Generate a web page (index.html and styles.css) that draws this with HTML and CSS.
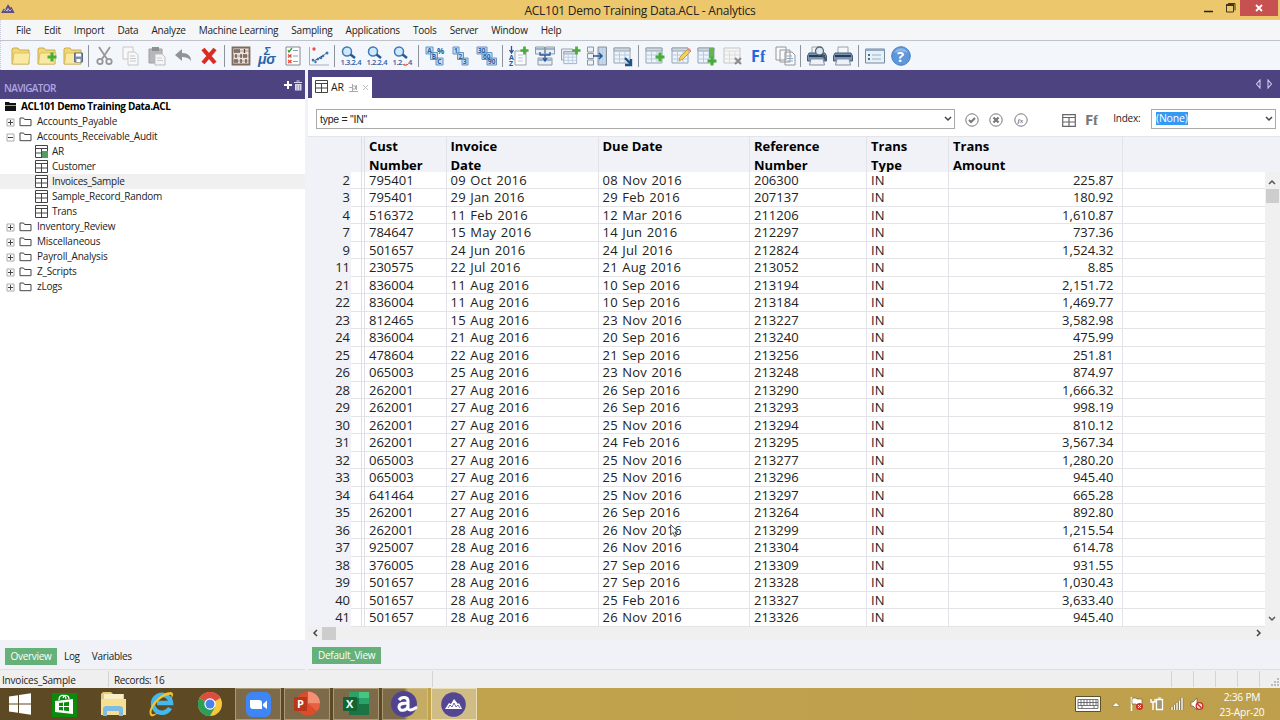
FILE: index.html
```html
<!DOCTYPE html>
<html lang="en">
<head>
  <meta charset="UTF-8" />
  <meta name="viewport" content="width=device-width, initial-scale=1.0"/>
  <title>ACL101 Demo Training Data.ACL - Analytics</title>
  <link rel="stylesheet" href="styles.css">
</head>
<body>
  <svg class="defs">
    <symbol id="i-table" viewBox="0 0 13 13"><path d="M.5.5h12v12H.5zM.5 3.5h12M6.5 3.5v9M.5 8h12" fill="#fff" stroke="#444"/></symbol>
    <symbol id="i-folder" viewBox="0 0 13 10"><path d="M1 8.7V1h3.6l1 1.5H12v6.2z" fill="#fff" stroke="#444"/></symbol>
    <symbol id="i-yfolder" viewBox="0 0 20 20"><path d="M1 18V3l1-1h5l1.500 2H18v14z" fill="#f0d878" stroke="#c9ac4c"/><path d="M1.500 18 3 7h16l-1.500 11z" fill="#fae9a0" stroke="#d3b65a" stroke-width=".7"/></symbol>
    <symbol id="i-lens" viewBox="0 0 20 20"><circle cx="6" cy="5.500" r="4.500" fill="#d2e9fb" stroke="#3c79b8" stroke-width="1.500"/><path d="M9.500 8.500 14 12" stroke="#26599a" stroke-width="2.500"/></symbol>
    <symbol id="i-grid" viewBox="0 0 20 20"><path d="M1 2h16v15H1z" fill="#eef4fb" stroke="#98a3ad"/><path d="M1 2h16v3H1z" fill="#cfd9e2" stroke="#98a3ad"/><path d="M6.500 5v12M12 5v12M1 9h16M1 13h16" stroke="#b5cbe2"/></symbol>
    <symbol id="i-plus" viewBox="0 0 10 10"><path d="M5 .5v9M.5 5h9" stroke="#48ad37" stroke-width="3"/></symbol>
    <symbol id="i-printer" viewBox="0 0 20 20"><path d="M5 8V1h10v7" fill="#f5f7f9" stroke="#9aa4ad"/><path d="M2 7h16l1.500 3v5H.5v-5z" fill="#7b93b1" stroke="#465b75"/><path d="M2 10h16" stroke="#243b5c" stroke-width="2"/><path d="M4 13h12l1.500 6h-15z" fill="#eef2f6" stroke="#8291a0"/></symbol>
    <symbol id="i-peaks" viewBox="0 0 16 12"><path d="m0 11 3-5 1.500 1L8 1l3 4 1-1 3.500 7z"/><path d="m3 9 2-2 2 2 1-3 2 3 2-2" fill="none" stroke="#d9d2e7"/></symbol>
  </svg>

  <div class="titlebar">
    <svg class="app-icon" viewBox="0 0 16 12"><use href="#i-peaks"/></svg>
    <div class="caption">ACL101 Demo Training Data.ACL - Analytics</div>
    <div class="win-btns">
      <svg width="50" height="19"><path d="M3 11.500h9" stroke="#222" stroke-width="1.500"/><path d="M27 3.500h7v7M25.500 5h7v7h-7z" fill="none" stroke="#453718"/><path d="M25 5h8" stroke="#222" stroke-width="1.500"/></svg>
      <div class="close"><svg width="8" height="8"><path d="m1 1 6 6M7 1 1 7" stroke="#fff" stroke-width="1.800"/></svg></div>
    </div>
  </div>

  <div class="menubar">
    <span>File</span><span>Edit</span><span>Import</span><span>Data</span><span>Analyze</span><span>Machine Learning</span><span>Sampling</span><span>Applications</span><span>Tools</span><span>Server</span><span>Window</span><span>Help</span>
  </div>

  <div class="toolbar">
    <svg viewBox="0 0 20 20"><use href="#i-yfolder"/></svg>
    <svg viewBox="0 0 20 20"><use href="#i-yfolder"/><use href="#i-plus" x="10" y="6" width="10" height="10"/></svg>
    <svg viewBox="0 0 20 20"><use href="#i-yfolder"/><path d="M11.500 7h8v9h-8z" fill="#7e8fae" stroke="#5e6b85"/><path d="M13 7.500h5v3h-5zM13.500 13h4v3h-4z" fill="#fff"/></svg>
    <i></i>
    <svg viewBox="0 0 20 20"><g fill="none" stroke="#979797" stroke-width="1.800"><path d="m4 1 8 12M15 1 7 13"/><circle cx="5" cy="15.500" r="2.700"/><circle cx="14" cy="15.500" r="2.700"/></g></svg>
    <svg viewBox="0 0 20 20" fill="#f8f8f8" stroke="#c6c8ca"><path d="M2 1h10v12H2z"/><path d="M7 6h7l3 3v10H7z"/><path d="M9 10h5M9 12.500h6M9 15h6"/></svg>
    <svg viewBox="0 0 20 20"><path d="M2 3h13v14H2z" fill="#b5b7ba" stroke="#9da0a3"/><path d="M5 1h7v4H5z" fill="#8d9093"/><path d="M8 8h7l3 3v8H8z" fill="#f5f5f5" stroke="#b9bcbf"/><path d="M10 12h5M10 14.500h6" stroke="#ccc"/></svg>
    <svg viewBox="0 0 20 20"><path d="m2 9 7-6v4c6 0 9 3 9 8-2-3-5-4-9-4v4z" fill="#909498"/></svg>
    <svg viewBox="0 0 20 20"><path d="m4 3 12 14M16 3 4 17" stroke="#dc2b20" stroke-width="4.200"/></svg>
    <i></i>
    <svg viewBox="0 0 20 20"><path d="M1.500 1.500h17v17h-17z" fill="#eee2da" stroke="#806b62" stroke-width="1.800"/><path d="M2 5h16M2 10h16M2 15h16" stroke="#8c7a72" stroke-width=".7"/><path d="M4 3v4M6 3v4M8 3v4M13.500 3v4M5 8v4M10 8v4M13 8v4M15 8v4M4 13v4M6 13v4M10 13v4M15 13v4" stroke="#5a4944" stroke-width="1.300"/></svg>
    <svg viewBox="0 0 20 20" class="greek"><text x="7" y="8.500" font-size="11">Σ</text><text x="1" y="17.500" font-size="14">μσ</text></svg>
    <svg viewBox="0 0 20 20"><path d="M3 1h14v18H3z" fill="#fff" stroke="#85898d"/><path d="m5 4 1 2 3-4" fill="none" stroke="#329e37" stroke-width="1.300"/><path d="m5 8.500 3.500 3M8.500 8.500 5 11.500M5 14l3.500 3M8.500 14 5 17" stroke="#e24838" stroke-width="1.400"/><path d="M10 4.500h5M10 10h5M10 15.500h5" stroke="#8da0ba"/></svg>
    <svg viewBox="0 0 20 20"><path d="M.5 1v18H20" fill="none" stroke="#a6adb6"/><path d="m3 16 5-2 5-3 6-5" stroke="#c0cbd9" stroke-width=".7"/><g fill="#3676b7"><circle cx="4" cy="14" r="1.300"/><circle cx="6.500" cy="16" r="1.200"/><circle cx="9" cy="13" r="1.300"/><circle cx="12" cy="12" r="1.300"/><circle cx="14" cy="10" r="1.300"/><circle cx="18" cy="7" r="1.500"/></g><circle cx="5" cy="3" r="1.700" fill="#ed5146"/></svg>
    <i></i>
    <svg viewBox="0 0 20 20" class="num"><use href="#i-lens"/><text x="-.5" y="18.500">1.3.2.4</text></svg>
    <svg viewBox="0 0 20 20" class="num"><use href="#i-lens"/><text x="-.5" y="18.500">1.2.2.4</text></svg>
    <svg viewBox="0 0 20 20" class="num"><use href="#i-lens"/><text x="-.5" y="18.500">1.2._.4</text><path d="m11 18 1.500 1 1.500-1" fill="none" stroke="#e4513f"/></svg>
    <i></i>
    <svg viewBox="0 0 20 20" class="box"><path d="M1 1h7v7H1zM5.500 6.500h7v7h-7zM11 12h7v7h-7z"/><text x="2.200" y="7">A</text><text x="6.800" y="12.500">B</text><text x="12.300" y="18">C</text><text x="12" y="8" font-size="8">%</text></svg>
    <svg viewBox="0 0 20 20" class="box"><path d="M2 1h6v7H2zM6.500 6.500h6v7h-6zM11 12h6v7h-6z"/><text x="3" y="7">1</text><text x="7.500" y="12.500">2</text><text x="12" y="18">3</text></svg>
    <svg viewBox="0 0 20 20" class="box"><path d="M0 1h10v7H0zM5 6.500h10v7H5zM10 12h9.500v7H10z"/><text x="1" y="7">30</text><text x="6" y="12.500">60</text><text x="11" y="18">90</text></svg>
    <i></i>
    <svg viewBox="0 0 20 20" class="az"><path d="M6 5h11v14H6z" fill="#fafcfd" stroke="#9aa3ab"/><path d="M9 9h5M9 12h5M9 15h5" stroke="#b9c5d2"/><path d="M2.500 0v6M.5 4l2 3 2-3" fill="none" stroke="#28569a" stroke-width="1.300"/><text x="0" y="13.500">A</text><text x="0" y="20">Z</text><use href="#i-plus" x="11" y="0" width="9" height="9"/></svg>
    <svg viewBox="0 0 20 20"><path d="M.5 1h9v7h-9zM10.500 1h9v7h-9zM3 12h14v7H3z" fill="#e5edf5" stroke="#8d9aa6"/><path d="M1 3h8M11 3h8M3 14h14" stroke="#9fb4c9" stroke-width="2"/><path d="M5 6v3h10V6M10 9v5m-2-2 2 3 2-3" fill="none" stroke="#28569a" stroke-width="1.300"/></svg>
    <svg viewBox="0 0 20 20"><path d="M.5 3h11v11H.5z" fill="#e9eff5" stroke="#9aa3ab"/><use href="#i-grid" x="2" y="4" width="16" height="16"/><use href="#i-plus" x="11" y="0" width="9" height="9"/></svg>
    <svg viewBox="0 0 20 20"><path d="M.5 1h6v5h-6zM.5 7.500h6v5h-6zM.5 14h6v5h-6z" fill="#eef3f8" stroke="#8995a0"/><path d="M11 1h8.500v18H11z" fill="#b9cde2" stroke="#8997a5"/><path d="M14 2v16M17 2v16" stroke="#d5e2ee"/><path d="M6 10h9m-3-3 3 3-3 3" fill="none" stroke="#28569a" stroke-width="1.500"/></svg>
    <svg viewBox="0 0 20 20"><use href="#i-grid"/><path d="m12 12 6 6m0-5v6h-6" fill="none" stroke="#235286" stroke-width="2.400"/></svg>
    <i></i>
    <svg viewBox="0 0 20 20"><use href="#i-grid"/><use href="#i-plus" x="10" y="6" width="10" height="10"/></svg>
    <svg viewBox="0 0 20 20"><use href="#i-grid"/><path d="m8 15 1-4 8-8 3 2-8 8z" fill="#f1d35b" stroke="#b28e2f" stroke-width=".8"/><path d="m16 4 2-2 2 2-1.500 2z" fill="#e98c92"/></svg>
    <svg viewBox="0 0 20 20"><use href="#i-grid"/><path d="M12 2h5v10h-5z" fill="#64b451"/><use href="#i-plus" x="10" y="10" width="10" height="10"/></svg>
    <svg viewBox="0 0 20 20"><path d="M1 2h16v15H1z" fill="#f6f6f6" stroke="#c5c5c5"/><path d="M1 5h16M6.500 5v12M12 5v12M1 9h16M1 13h16" stroke="#ddd"/><path d="m12 12 6 6M18 12l-6 6" stroke="#8b8b8b" stroke-width="2"/></svg>
    <svg viewBox="0 0 20 20" class="ff"><text x="2" y="16">F</text><text x="11" y="16" class="serif">f</text></svg>
    <svg viewBox="0 0 20 20" fill="#fafafa" stroke="#92979c"><path d="M1 1h10v13H1zM5 4h10v12H5zM10 6h7l3 3v10H10z"/><path d="M12 10h5M12 12.500h6M12 15h6" stroke="#8fabc9"/></svg>
    <i></i>
    <svg viewBox="0 0 20 20"><use href="#i-printer"/><circle cx="12.500" cy="5" r="4" fill="#dce8f2" stroke="#5a6775" stroke-width="1.300"/><path d="m15 8 4 6" stroke="#4b5663" stroke-width="2.200"/></svg>
    <svg viewBox="0 0 20 20"><use href="#i-printer"/></svg>
    <i></i>
    <svg viewBox="0 0 20 20"><path d="M.5 3h19v14H.5z" fill="#e4f1f9" stroke="#77889b"/><path d="M.5 3h19v2H.5z" fill="#8ba8c9"/><path d="M3 8h2v2H3zM3 12h2v2H3z" fill="#54697f"/><path d="M7 9h9M7 13h9" stroke="#a0afba"/></svg>
    <svg viewBox="0 0 20 20"><circle cx="10" cy="10" r="9.300" fill="#5d97dc" stroke="#447dbe"/><path d="M3 7a7.500 7.500 0 0 1 14 0c-5-2-9-2-14 0" fill="#8bb7ea"/><text x="6" y="15.500" class="help">?</text></svg>
  </div>

  <div class="workspace">
    <div class="navigator">
      <div class="nav-head"><span>NAVIGATOR</span>
        <svg width="20" height="12"><path d="M5 1v8M1 5h8" stroke="#fff" stroke-width="2"/><path d="M11 2.500h8M13.500 1h3" stroke="#dcd7ef" stroke-width="1.200"/><path d="M12 4h6.500v6.500H12z" fill="#dcd7ef"/><path d="M14 5v5M16.500 5v5" stroke="#8d84b5" stroke-width=".7"/></svg>
      </div>
      <div class="tree" id="tree">
        <div class="root"><svg width="13" height="11"><path d="M1 10V1h4l1 1h6v8z" fill="#111"/><path d="M0 4.500h13" stroke="#fff" stroke-width=".6"/></svg>ACL101 Demo Training Data.ACL</div>
      </div>
      <div class="tabs"><b>Overview</b><span>Log</span><span>Variables</span></div>
    </div>

    <div class="view">
      <div class="view-head">
        <div class="tab"><svg width="13" height="13"><use href="#i-table"/></svg>AR
          <svg class="pin" width="9" height="8"><path d="M0 3.500h3M3.500 0v7M3.500 2h3v3h-3M7.500 1v5M0 7.500h9" stroke="#aaa" fill="none"/></svg>
          <svg width="7" height="7"><path d="m1 1 5 5M6 1 1 6" stroke="#bbb"/></svg>
        </div>
        <svg width="18" height="10"><path d="M5 1v8L1.500 5zM13 1v8l3.500-4z" fill="none" stroke="#cfc7ee" stroke-width="1.100"/></svg>
      </div>
      <div class="filter">
        <div class="combo expr">type = "IN"<svg width="8" height="6"><path d="m1 1 3 3 3-3" fill="none" stroke="#444" stroke-width="1.500"/></svg></div>
        <svg class="round" viewBox="0 0 14 14"><circle cx="7" cy="7" r="6.200"/><path d="m4 7 2 2 4-4" stroke-width="2"/></svg>
        <svg class="round" viewBox="0 0 14 14"><circle cx="7" cy="7" r="6.200"/><path d="m4.500 4.500 5 5M9.500 4.500l-5 5" stroke-width="2.200"/></svg>
        <svg class="round" viewBox="0 0 14 14"><circle cx="7" cy="7" r="6.200"/><text x="3.500" y="9.500">fx</text></svg>
        <svg class="grid-btn" viewBox="0 0 14 13"><path d="M.7.7h12.600v11.600H.7zM.7 3.500h12.600M7 3.500v9M.7 8h12.600" fill="none" stroke="#666" stroke-width="1.200"/></svg>
        <svg class="font-btn" viewBox="0 0 14 14"><text x="0" y="12">F</text><text x="8" y="12" class="serif">f</text></svg>
        <label>Index:</label>
        <div class="combo index"><em>(None)</em><svg width="8" height="6"><path d="m1 1 3 3 3-3" fill="none" stroke="#444" stroke-width="1.500"/></svg></div>
      </div>
      <div class="grid-head">
        <div class="gut"></div><div class="split"></div>
        <div>Cust<br>Number</div><div>Invoice<br>Date</div><div>Due Date</div><div>Reference<br>Number</div><div>Trans<br>Type</div><div>Trans<br>Amount</div><div></div>
      </div>
      <div class="grid-body">
        <div class="rows" id="rows"></div>
        <div class="vscroll">
          <svg width="8" height="6"><path d="m1 5 3-3 3 3" fill="none" stroke="#555" stroke-width="1.500"/></svg>
          <div class="thumb"></div>
          <svg class="down" width="8" height="6"><path d="m1 1 3 3 3-3" fill="none" stroke="#555" stroke-width="1.500"/></svg>
        </div>
      </div>
      <div class="hscroll">
        <svg width="6" height="8"><path d="M5 1 2 4l3 3" fill="none" stroke="#444" stroke-width="1.500"/></svg>
        <div class="thumb"></div>
        <svg class="right" width="6" height="8"><path d="m1 1 3 3-3 3" fill="none" stroke="#444" stroke-width="1.500"/></svg>
      </div>
      <div class="tabs"><b>Default_View</b></div>
    </div>
  </div>

  <div class="statusbar"><span class="name">Invoices_Sample</span><span class="records">Records: 16</span><span class="rest"></span><span></span><span></span><span></span><span></span>
    <svg width="8" height="8"><path d="M6 0h2v2H6zM3 3h2v2H3zM6 3h2v2H6zM0 6h2v2H0zM3 6h2v2H3zM6 6h2v2H6z" fill="#bbb"/></svg>
  </div>

  <div class="taskbar">
    <div class="task start"><svg width="22" height="22" viewBox="0 0 22 22"><path d="m0 3.500 9-1.300v8.300H0zM10 2l12-1.700v10.200H10zM0 11.500h9v8.300l-9-1.300zM10 11.500h12v10.200L10 20z" fill="#fff"/></svg></div>
    <div class="task store"><svg width="25" height="25" viewBox="0 0 25 25"><path d="M0 1h25v24H0z" fill="#0b8a0e"/><path d="M7 8c0-6 7-6 7-1M11 6c1-4 6-3 6 1" fill="none" stroke="#fff" stroke-width="1.200"/><path d="m3 9 18-2v15L3 20z" fill="#fff"/><path d="m7 11 4-.5V14H7zM12 10.400l5-.6V14h-5zM7 15h4v3.500L7 18zM12 15h5v4.200l-5-.6z" fill="#0b8a0e"/></svg></div>
    <div class="task explorer"><svg width="26" height="26" viewBox="0 0 26 26"><path d="M1 3 3 1h8l2 2h11v20H1z" fill="#e6cb72"/><path d="M4 3h19v6H4z" fill="#f7eec7"/><path d="M1 8h25v16H1z" fill="#f5df91"/><path d="M3 25v-7c0-3 3-3 4-3h12c3 0 4 1 4 3v7h-4v-5H7v5z" fill="#7fbbe3"/></svg></div>
    <div class="task ie"><svg width="26" height="26" viewBox="0 0 26 26"><path d="M22 17a9 9 0 1 1 1-5H9" fill="none" stroke="#45b8eb" stroke-width="4.500"/><path d="M3 25c-6-5 8-24 20-24 4 1 1 6 0 7 1-3 1-5-2-4C10 6 1 20 4 23c2 1 5-1 6-2-2 3-5 5-7 4" fill="#f1c432"/></svg></div>
    <div class="task chrome"><svg width="24" height="24" viewBox="0 0 24 24"><circle cx="12" cy="12" r="12" fill="#f7c83b"/><path d="M12 12 1.600 6A12 12 0 0 1 22.400 6z" fill="#dd4c40"/><path d="M12 12 1.600 6A12 12 0 0 0 12 24l5-9z" fill="#2e9d58"/><circle cx="12" cy="12" r="5.700" fill="#fff"/><circle cx="12" cy="12" r="4.500" fill="#4684ec"/></svg></div>
    <div class="task open zoom"><svg width="25" height="25" viewBox="0 0 25 25"><rect width="25" height="25" rx="6" fill="#3e86f5"/><path d="M4 8h9q3 0 3 3v6H7q-3 0-3-3zM17 12l4-3.500v8.500l-4-3z" fill="#fff"/></svg></div>
    <div class="task open ppt"><svg width="26" height="26" viewBox="0 0 26 26"><circle cx="14" cy="12.500" r="12" fill="#d94d2c"/><path d="M14 .5a12 12 0 0 1 12 12H14z" fill="#f38f73"/><path d="M14 12.500h12a12 12 0 0 1-3 8z" fill="#e86043"/><rect y="6" width="13" height="14" rx="1" fill="#b9351b"/><text x="3" y="17">P</text></svg></div>
    <div class="task open excel"><svg width="26" height="26" viewBox="0 0 26 26"><path d="M6 1h20v23H6z" fill="#1a7444"/><path d="M6 1h10v6H6zM16 7h10v6H16z" fill="#2ba268"/><path d="M16 1h10v6H16z" fill="#43c783"/><rect y="6" width="14" height="14" rx="1" fill="#0f6534"/><text x="3" y="17">X</text></svg></div>
    <div class="task open acl-a"><svg width="27" height="26" viewBox="0 0 27 26"><circle cx="13" cy="13" r="13" fill="#504492"/><path d="M8 9c3-4 9-3 9 1v8M17 12c-4 0-9 0-9 4 0 5 8 4 9-1m0 3c3 3 7-1 9-2" fill="none" stroke="#fff" stroke-width="3"/></svg></div>
    <div class="task open active"><svg width="25" height="25" viewBox="0 0 25 25"><circle cx="12.500" cy="12.500" r="12.300" fill="#534793"/><path d="m4 17 4-6 2 1 3-5 4 5 1-1 3 6z" fill="#fff"/><path d="m7 16 2-3 2 2 2-4 2 4 2-2 2 3" fill="none" stroke="#534793" stroke-width=".8"/></svg></div>
    <div class="tray">
      <svg class="kbd" width="26" height="16" viewBox="0 0 26 16"><path d="M.5.5h25v15H.5z" fill="#fff" stroke="#5d5127"/><path d="M3 3.500h20v9H3zM3 6.500h20M3 9.500h20M6 3.500v6M9 3.500v6M12 3.500v6M15 3.500v6M18 3.500v6M21 3.500v6M7 9.500v3M19 9.500v3" fill="none" stroke="#555" stroke-width=".8"/></svg>
      <svg class="up" width="8" height="5"><path d="m0 4.500 4-4 4 4z" fill="#fff" stroke="#75602b" stroke-width=".5"/></svg>
      <svg width="14" height="14" viewBox="0 0 14 14"><path d="M1.500 0v14" stroke="#fff" stroke-width="1.500"/><path d="M2 1h4l1 1h5v6H7L6 7H2z" fill="#fff" stroke="#64542c" stroke-width=".6"/><circle cx="9.500" cy="9.500" r="3.500" fill="#d1302b"/><path d="m8 8 3 3M11 8l-3 3" stroke="#fff"/></svg>
      <svg width="14" height="14" viewBox="0 0 14 14"><path d="M1 2v3h4V2M3 5v8" fill="none" stroke="#fff" stroke-width="1.400"/><path d="M6.500 2.500h6v10h-6z" fill="#a19773" stroke="#fff" stroke-width="1.300"/><path d="M8 1h3" stroke="#fff"/></svg>
      <svg width="14" height="14" viewBox="0 0 14 14"><path d="M2 10v3M4.500 8v5M7 6v7M9.500 3.500V13M12 1v12" stroke="#5f502a" stroke-width="2.400"/><path d="M2 10v3M4.500 8v5M7 6v7M9.500 3.500V13M12 1v12" stroke="#fff" stroke-width="1.500"/></svg>
      <svg width="14" height="14" viewBox="0 0 14 14"><path d="M1 5h2l4-4v12L3 9H1z" fill="#fff" stroke="#6d5c30" stroke-width=".7"/><circle cx="9.500" cy="9" r="3.300" fill="#f7d9d4" stroke="#cd2c27" stroke-width="1.300"/><path d="m7.500 7 4 4" stroke="#cd2c27" stroke-width="1.300"/></svg>
    </div>
    <div class="clock">2:36 PM<br>23-Apr-20</div>
  </div>

  <svg class="cursor" viewBox="0 0 10 14"><path d="M.7.700v10l2.400-2.200 1.700 4 1.700-.8-1.700-3.800H8z" fill="#fff" stroke="#333" stroke-width=".8"/></svg>

  <script>
    const treeItems = [
      ['+', 'Accounts_Payable'],
      ['-', 'Accounts_Receivable_Audit'],
      ['', 'AR', 'open-table'],
      ['', 'Customer'],
      ['', 'Invoices_Sample', 'selected'],
      ['', 'Sample_Record_Random'],
      ['', 'Trans'],
      ['+', 'Inventory_Review'],
      ['+', 'Miscellaneous'],
      ['+', 'Payroll_Analysis'],
      ['+', 'Z_Scripts'],
      ['+', 'zLogs']
    ];

    // record, customer, invoice date, due date, reference, amount
    const records = `2|795401|09 Oct 2016|08 Nov 2016|206300|225.87
3|795401|29 Jan 2016|29 Feb 2016|207137|180.92
4|516372|11 Feb 2016|12 Mar 2016|211206|1,610.87
7|784647|15 May 2016|14 Jun 2016|212297|737.36
9|501657|24 Jun 2016|24 Jul 2016|212824|1,524.32
11|230575|22 Jul 2016|21 Aug 2016|213052|8.85
21|836004|11 Aug 2016|10 Sep 2016|213194|2,151.72
22|836004|11 Aug 2016|10 Sep 2016|213184|1,469.77
23|812465|15 Aug 2016|23 Nov 2016|213227|3,582.98
24|836004|21 Aug 2016|20 Sep 2016|213240|475.99
25|478604|22 Aug 2016|21 Sep 2016|213256|251.81
26|065003|25 Aug 2016|23 Nov 2016|213248|874.97
28|262001|27 Aug 2016|26 Sep 2016|213290|1,666.32
29|262001|27 Aug 2016|26 Sep 2016|213293|998.19
30|262001|27 Aug 2016|25 Nov 2016|213294|810.12
31|262001|27 Aug 2016|24 Feb 2016|213295|3,567.34
32|065003|27 Aug 2016|25 Nov 2016|213277|1,280.20
33|065003|27 Aug 2016|25 Nov 2016|213296|945.40
34|641464|27 Aug 2016|25 Nov 2016|213297|665.28
35|262001|27 Aug 2016|26 Sep 2016|213264|892.80
36|262001|28 Aug 2016|26 Nov 2016|213299|1,215.54
37|925007|28 Aug 2016|26 Nov 2016|213304|614.78
38|376005|28 Aug 2016|27 Sep 2016|213309|931.55
39|501657|28 Aug 2016|27 Sep 2016|213328|1,030.43
40|501657|28 Aug 2016|25 Feb 2016|213327|3,633.40
41|501657|28 Aug 2016|26 Nov 2016|213326|945.40`;

    const tree = document.getElementById('tree');
    treeItems.forEach(([sign, label, cls]) => {
      const div = document.createElement('div');
      div.className = 'item ' + (sign ? 'folder ' : 'table ') + (cls || '');
      if (sign) {
        const bar = sign === '+' ? 'M2 4.500h5M4.500 2v5' : 'M2 4.500h5';
        div.innerHTML = `<svg class="sign" viewBox="0 0 9 9"><path d="M1 1h7v7H1z" fill="#fff" stroke="#aaa"/><path d="${bar}" stroke="#444"/></svg><svg class="pic" width="13" height="10"><use href="#i-folder"/></svg>${label}`;
      } else {
        const mark = cls === 'open-table' ? '<path d="M7 6h6v7H7z" fill="#4fa060"/>' : '';
        div.innerHTML = `<svg class="pic" width="13" height="13"><use href="#i-table"/>${mark}</svg>${label}`;
      }
      tree.appendChild(div);
    });

    const rows = document.getElementById('rows');
    records.split('\n').forEach(line => {
      const [no, cust, inv, due, ref, amount] = line.split('|');
      const row = document.createElement('div');
      row.className = 'row';
      row.innerHTML = `<div class="gut">${no}</div><div class="split"></div><div>${cust}</div><div class="date">${inv}</div><div class="date">${due}</div><div>${ref}</div><div>IN</div><div class="amount">${amount}</div><div></div>`;
      rows.appendChild(row);
    });
  </script>
</body>
</html>
```
FILE: styles.css
```css
* {
  box-sizing: border-box;
}

body {
  margin: 0;
  width: 1280px;
  height: 720px;
  overflow: hidden;
  display: flex;
  flex-direction: column;
  font-family: "Open Sans", "Noto Sans", sans-serif;
  font-size: 10px;
  letter-spacing: -0.2px;
  color: #222;
  background: #f0f2f8;
}

svg {
  flex: none;
  display: block;
}

.defs {
  width: 0;
  height: 0;
  position: absolute;
}

.titlebar {
  height: 20px;
  flex: none;
  display: grid;
  grid-template-columns: 100px 1fr 100px;
  background: #ecc76c;
  border-bottom: 1px solid #e3cb93;
}

.app-icon {
  width: 14px;
  height: 11px;
  margin: 3px 0 0 1px;
  fill: #604b83;
}

.caption {
  text-align: center;
  font-size: 12px;
  line-height: 21px;
  letter-spacing: -0.24px;
}

.win-btns {
  display: flex;
  justify-content: flex-end;
  padding-right: 2px;
}

.win-btns > svg {
  margin-right: -11px;
}

.close {
  width: 38px;
  height: 16px;
  background: #c75050;
  display: flex;
  align-items: center;
  justify-content: center;
}

.menubar {
  height: 21px;
  flex: none;
  display: flex;
  gap: 13px;
  padding-left: 15px;
  line-height: 20px;
  letter-spacing: -0.22px;
  background: #f5f6f8;
  border-bottom: 1px solid #bfc2ca;
}

.menubar,
.toolbar {
  border-left: 1px dotted #c3c9d8;
}

.toolbar {
  height: 29px;
  flex: none;
  display: flex;
  align-items: center;
  padding-left: 7px;
  background: #f3f6fa;
}

.toolbar svg {
  width: 20px;
  height: 20px;
  margin: 0 3px;
  overflow: visible;
}

.toolbar i {
  width: 2px;
  height: 22px;
  margin: 0 2px;
  border-left: 1px solid #8e939b;
}

.greek {
  font-family: "Liberation Sans", sans-serif;
  font-weight: bold;
  font-style: italic;
  fill: #2565ac;
}

.num {
  font-size: 7.5px;
  font-weight: 600;
  letter-spacing: -0.4px;
  fill: #2a62a2;
}

.box {
  font-size: 6.5px;
  font-weight: bold;
  letter-spacing: 0;
  fill: #2c609f;
}

.box path {
  fill: #c5dcf2;
  stroke: #6794c2;
}

.az {
  font-size: 7px;
  font-weight: bold;
  fill: #28569a;
}

.ff {
  font-size: 16px;
  font-weight: bold;
  fill: #2567d8;
}

.serif {
  font-family: "Liberation Serif", serif;
}

.help {
  font-size: 15px;
  font-weight: bold;
  fill: #fff;
}

.workspace {
  height: 600px;
  flex: none;
  display: grid;
  grid-template-columns: 305px 972px;
  column-gap: 3px;
}

.navigator,
.view {
  display: flex;
  flex-direction: column;
}

.nav-head {
  height: 29px;
  flex: none;
  display: flex;
  justify-content: space-between;
  background: #4d4380;
  color: #b1a6e2;
  font-weight: 600;
  letter-spacing: -0.65px;
  padding: 10px 2px 0 4px;
  line-height: 17px;
}

.tree {
  flex: 1;
  background: #fff;
}

.root,
.item {
  height: 15px;
  line-height: 15px;
  display: flex;
  align-items: center;
}

.root {
  font-weight: bold;
  color: #000;
  padding-left: 4px;
  gap: 4px;
  letter-spacing: -0.36px;
}

.item.folder {
  padding-left: 6px;
}

.sign {
  width: 9px;
  height: 9px;
  margin: 2px 4px 0 0;
}

.pic {
  margin-right: 4px;
}

.item.folder .pic {
  margin-right: 5px;
}

.item.table {
  padding-left: 35px;
  letter-spacing: -0.27px;
}

.item.selected {
  background: #f0f0f0;
}

.tabs {
  height: 30px;
  flex: none;
  display: flex;
  align-items: center;
  gap: 14px;
  padding: 3px 0 0 5px;
  border-bottom: 1px solid #dcdfe7;
  line-height: 17px;
  letter-spacing: -0.3px;
}

.tabs b {
  height: 17px;
  padding: 0 5.5px;
  margin-right: -7px;
  background: #66b179;
  color: #fff;
  font-weight: normal;
}

.tabs span + span {
  margin-left: -2px;
}

.view-head {
  height: 28px;
  flex: none;
  display: flex;
  justify-content: space-between;
  background: #4d4380;
  padding: 7px 7px 0 4px;
}

.view-head > svg {
  margin-top: 2px;
}

.tab {
  width: 60px;
  height: 21px;
  display: flex;
  align-items: center;
  gap: 3px;
  padding: 0 3px 2px;
  background: #fff;
  font-size: 10.5px;
}

.tab .pin {
  margin: 2px 0 0 2px;
}

.tab .pin + svg {
  margin: 2px 0 0 1px;
}

.filter {
  height: 38px;
  flex: none;
  display: flex;
  align-items: center;
  padding: 4px 4px 0 8px;
  background: #fff;
}

.combo {
  height: 20px;
  flex: none;
  display: flex;
  align-items: center;
  justify-content: space-between;
  border: 1px solid #aaa;
  padding: 0 3px;
  background: #fff;
}

.combo.expr {
  width: 639px;
  margin: 0 10px 0 0;
  font-family: "Liberation Sans", sans-serif;
  font-size: 10.5px;
  letter-spacing: -0.25px;
}

.combo.expr svg {
  margin-right: -1px;
}

.round {
  width: 14px;
  height: 14px;
  margin: 1px 10.4px 0 0;
  fill: none;
  stroke: #777;
}

.round text {
  font: italic bold 7px "Liberation Serif", serif;
  fill: #777;
  stroke: none;
}

.grid-btn {
  width: 14px;
  height: 13px;
  margin: 2px 9px 0 24px;
}

.font-btn {
  width: 14px;
  height: 14px;
  margin-top: 2px;
  font-size: 15px;
  font-weight: bold;
  fill: #777;
}

.filter label {
  margin: -3px 0 0 14px;
}

.combo.index {
  width: 125px;
  margin: -1px 0 0 auto;
  padding: 0 2px 0 4px;
}

.combo em {
  font-style: normal;
  font-size: 10.5px;
  line-height: 13px;
  letter-spacing: -0.2px;
  background: #3498f5;
  color: #fff;
}

.grid-head,
.row {
  display: grid;
  grid-template-columns: 43px 14px 81.5px 152px 151.5px 117px 82px 174px 1fr;
}

.grid-head {
  height: 35.5px;
  flex: none;
  overflow: hidden;
  font-size: 13px;
  line-height: 19px;
  font-weight: bold;
  letter-spacing: 0;
  color: #000;
  background: #f0f2f8;
  border-top: 1px solid #e3e5eb;
}

.grid-head > div,
.row > div {
  padding-left: 4px;
  border-right: 1px solid #e2e3e8;
}

.grid-head > div:last-child,
.row > div:last-child {
  border: 0;
}

.grid-body {
  height: 455px;
  flex: none;
  display: flex;
  overflow: hidden;
}

.rows {
  width: 957px;
  background: #fff;
}

.row {
  height: 17.5px;
  font-size: 13px;
  line-height: 17.5px;
  letter-spacing: 0;
  border-bottom: 1px solid #e4e4e8;
}

.row .gut,
.grid-head .gut {
  border: 0;
}

.row .gut {
  background: #f0f2f8;
  text-align: right;
  padding-right: 1px;
}

.row .split,
.grid-head .split {
  border-right: 4px double #dddfe5;
}

.row .date {
  letter-spacing: 0.2px;
  word-spacing: 0.9px;
}

.row .amount {
  text-align: right;
  padding-right: 8.5px;
}

.vscroll {
  flex: 1;
  display: flex;
  flex-direction: column;
  align-items: center;
  padding: 7px 1px 5px 0;
  background: #f0f0f0;
}

.vscroll .thumb {
  width: 13px;
  height: 14px;
  margin-top: 4px;
  background: #cdcdcd;
}

.vscroll .down {
  margin-top: auto;
}

.hscroll {
  height: 13.5px;
  flex: none;
  display: flex;
  align-items: center;
  padding: 0 18px 0 4px;
  background: #f0f0f0;
}

.hscroll .thumb {
  width: 14px;
  height: 13px;
  margin-left: 4px;
  background: #cdcdcd;
}

.hscroll .right {
  margin-left: auto;
}

.view .tabs {
  padding: 2px 0 0 4px;
  letter-spacing: -0.25px;
}

.view .tabs b {
  padding: 0 6px;
}

.statusbar {
  height: 18px;
  flex: none;
  display: flex;
  align-items: center;
  line-height: 18px;
  background: #efefef;
}

.statusbar span {
  width: 22px;
  height: 16px;
  line-height: 18px;
  border-right: 1px solid #d2d4d8;
}

.statusbar .name {
  width: 109px;
  padding-left: 2px;
}

.statusbar .records {
  width: 324px;
  padding-left: 5px;
  letter-spacing: -0.35px;
}

.statusbar .rest {
  flex: 1;
}

.statusbar svg {
  margin: 6px 1px 0 11px;
}

.taskbar {
  height: 32px;
  flex: none;
  display: flex;
  align-items: center;
  background: linear-gradient(90deg, #5e4925 0, #5e4925 404px, #c1a34e 408px, #bea04c 100%);
}

.task {
  width: 49px;
  height: 32px;
  flex: none;
  display: flex;
  align-items: center;
  justify-content: center;
}

.task text {
  font-size: 11px;
  font-weight: bold;
  fill: #fff;
}

.task.start {
  width: 40px;
}

.task.store {
  width: 48px;
}

.task.ie {
  width: 48px;
}

.task.open {
  width: 46px;
  margin-right: 2.9px;
  border: 1px solid rgba(225, 210, 170, 0.45);
  background: rgba(210, 195, 165, 0.27);
}

.task.zoom {
  margin-left: 1px;
}

.task.active {
  background: #d0bd86;
  border-color: #e9ddb8;
}

.tray {
  margin-left: auto;
  display: flex;
  align-items: center;
  gap: 6px;
}

.tray .up {
  margin: 0 4px 0 5px;
}

.clock {
  width: 76px;
  text-align: center;
  color: #fff;
  font-size: 10.2px;
  line-height: 14.5px;
  padding-top: 1px;
}

/* pointer floats over the grid */
.cursor {
  position: absolute;
  left: 670px;
  top: 524px;
  width: 10px;
  height: 14px;
}
```
